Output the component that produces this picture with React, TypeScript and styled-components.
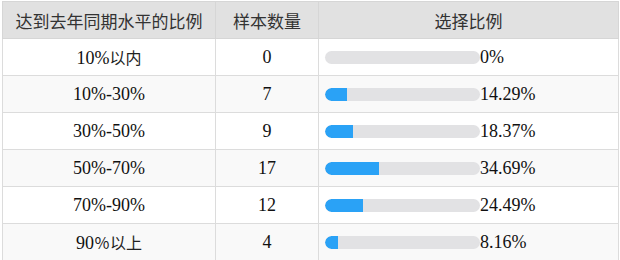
import React from "react";
import styled, { createGlobalStyle } from "styled-components";

const Global = createGlobalStyle`
  html, body { margin: 0; padding: 0; background: #fff; }
  body { font-family: "Liberation Serif", "Noto Sans CJK SC", serif; }
`;

const Wrap = styled.div`
  padding: 1px 2px 0 2px;
`;

const Table = styled.table`
  width: 617px;
  border-collapse: collapse;
  border: 1px solid #dcdcdc;
  table-layout: fixed;
`;

const Col = styled.col<{ $w: number }>`
  width: ${(p) => p.$w}px;
`;

const Th = styled.th`
  height: 36px;
  padding: 0;
  background: #e1e1e1;
  border: 1px solid #d6d6d6;
  font-family: "Noto Sans CJK SC", sans-serif;
  font-weight: 400;
  font-size: 17px;
  color: #333;
  text-align: center;
`;

const Tr = styled.tr<{ $alt: boolean }>`
  background: ${(p) => (p.$alt ? "#f9f9f9" : "#fff")};
`;

const Td = styled.td`
  height: 36px;
  padding: 0;
  border: 1px solid #dcdcdc;
  font-size: 18px;
  color: #111;
  text-align: center;
`;

const Cjk = styled.span`
  font-family: "Noto Sans CJK SC", sans-serif;
  font-size: 16px;
  color: #222;
`;

const BarCell = styled.td`
  height: 36px;
  padding: 0 0 0 6px;
  border: 1px solid #dcdcdc;
  font-size: 18px;
  color: #111;
`;

const BarRow = styled.div`
  display: flex;
  align-items: center;
`;

const Track = styled.div`
  width: 155px;
  height: 13px;
  border-radius: 7px;
  background: #e2e2e4;
  overflow: hidden;
  flex: none;
`;

const Fill = styled.div`
  height: 100%;
  background: #2aa2f6;
  border-radius: 7px 0 0 7px;
`;

const rows = [
  { num: "10%", cjk: "以内", n: 0, pct: 0, text: "0%" },
  { num: "10%-30%", cjk: "", n: 7, pct: 14.29, text: "14.29%" },
  { num: "30%-50%", cjk: "", n: 9, pct: 18.37, text: "18.37%" },
  { num: "50%-70%", cjk: "", n: 17, pct: 34.69, text: "34.69%" },
  { num: "70%-90%", cjk: "", n: 12, pct: 24.49, text: "24.49%" },
  { num: "90", cjk: "％以上", n: 4, pct: 8.16, text: "8.16%" },
];

export default function App() {
  return (
    <Wrap>
      <Global />
      <Table>
        <colgroup>
          <Col $w={213} />
          <Col $w={103} />
          <Col $w={300} />
        </colgroup>
        <thead>
          <tr>
            <Th>达到去年同期水平的比例</Th>
            <Th>样本数量</Th>
            <Th>选择比例</Th>
          </tr>
        </thead>
        <tbody>
          {rows.map((r, i) => (
            <Tr key={r.text} $alt={i % 2 === 1}>
              <Td>
                {r.num}
                {r.cjk && <Cjk>{r.cjk}</Cjk>}
              </Td>
              <Td>{r.n}</Td>
              <BarCell>
                <BarRow>
                  <Track>
                    <Fill style={{ width: `${r.pct}%` }} />
                  </Track>
                  {r.text}
                </BarRow>
              </BarCell>
            </Tr>
          ))}
        </tbody>
      </Table>
    </Wrap>
  );
}
